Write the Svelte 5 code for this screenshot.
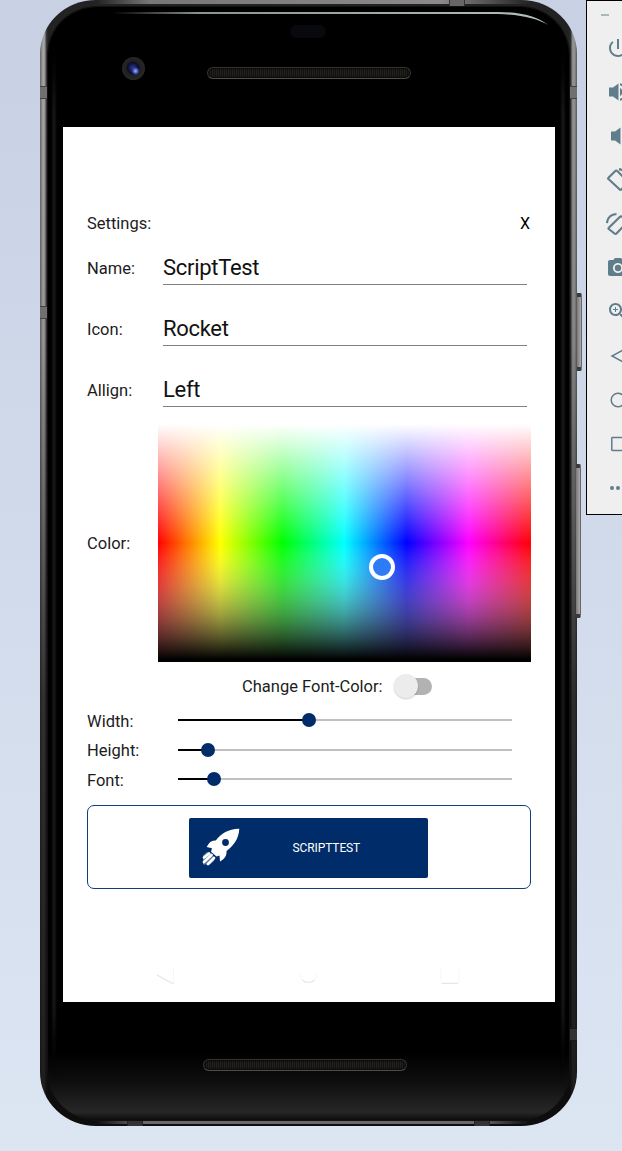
<script>
  const fields = [
    { label: 'Name:', value: 'ScriptTest' },
    { label: 'Icon:', value: 'Rocket' },
    { label: 'Allign:', value: 'Left' },
  ];
  const sliders = [
    { label: 'Width:', pct: 39.2 },
    { label: 'Height:', pct: 9 },
    { label: 'Font:', pct: 11 },
  ];

  // Transparent white to opaque black, blended through gray.
  const stops = Array.from({ length: 17 }, (_, i) => {
    const t = i / 16;
    const g = Math.round(255 * (1 - t));
    return `rgba(${g},${g},${g},${t}) ${50 + t * 49}%`;
  }).join(', ');
  const shade = `linear-gradient(to bottom, #fff 0%, rgba(255,255,255,0) 50%, ${stops})`;
  const hue = 'linear-gradient(to right, #f00, #ff0, #0f0, #0ff, #00f, #f0f, #f00)';

  const tools = [
    { fill: 'M13 3h-2v10h2V3zm4.83 2.17l-1.42 1.42C17.99 7.86 19 9.81 19 12c0 3.87-3.13 7-7 7s-7-3.13-7-7c0-2.19 1.01-4.14 2.58-5.42L6.17 5.17C4.23 6.82 3 9.26 3 12c0 4.97 4.03 9 9 9s9-4.03 9-9c0-2.74-1.23-5.18-3.17-6.83z' },
    { fill: 'M3 7.500v9h4l5.500 4V3.500L7 7.500H3zm13.500 4.500c0-1.770-1.020-3.290-2.500-4.030v8.050c1.480-.730 2.500-2.250 2.500-4.020zM14 3.230v2.060c2.890.860 5 3.540 5 6.710s-2.110 5.850-5 6.710v2.060c4.010-.910 7-4.490 7-8.770s-2.990-7.860-7-8.770z' },
    { fill: 'M18.500 12c0-1.770-1.020-3.290-2.500-4.030v8.050c1.480-.730 2.500-2.250 2.500-4.020zM5 7.500v9h4l5.500 4V3.500L9 7.500H5z' },
    { line: 'M2.500 9.800L9.300 3Q10.300 2 11.300 3L21.500 13.300Q22.500 14.300 21.500 15.300L15.500 21.300Q14.500 22.300 13.500 21.300L2.500 11Q1.700 10.400 2.500 9.800z M13 1.200Q18 2 20 6' },
    { line: 'M2.800 15.800L14 4.800Q15 3.800 16 4.800L20.500 9Q21.500 10 20.500 11L10.500 21.500Q9.500 22.500 8.500 21.500L2.800 17Q2.100 16.400 2.800 15.800z M.9 11Q2 2.500 10.500 2' },
    { fill: 'M9 2L7.170 4H4c-1.100 0-2 .900-2 2v12c0 1.100.900 2 2 2h16c1.100 0 2-.900 2-2V6c0-1.100-.900-2-2-2h-3.170L15 2H9zm3 15c-2.760 0-5-2.240-5-5s2.240-5 5-5 5 2.240 5 5-2.240 5-5 5zm0-1.800a3.200 3.200 0 1 0 0-6.400 3.200 3.200 0 0 0 0 6.400z' },
    { fill: 'M15.500 14h-.790l-.280-.270C15.410 12.590 16 11.110 16 9.500 16 5.910 13.090 3 9.500 3S3 5.910 3 9.500 5.910 16 9.500 16c1.610 0 3.090-.590 4.230-1.570l.270.280v.790l5 4.990L20.490 19l-4.990-5zm-6 0C7.010 14 5 11.990 5 9.500S7.010 5 9.500 5 14 7.010 14 9.500 11.990 14 9.500 14zM12 10h-2v2H9v-2H7V9h2V7h1v2h2v1z' },
    { thin: 'M18 5.500V18.500L6 12z' },
    { thin: 'M12 5.200a6.800 6.800 0 1 0 0 13.600a6.800 6.800 0 1 0 0-13.600z' },
    { thin: 'M6.500 5.500h12v13h-12q-.7 0-.7-.7v-11.600q0-.7.7-.7z' },
    { fill: 'M6 10a2 2 0 1 0 0 4 2 2 0 0 0 0-4zm6 0a2 2 0 1 0 0 4 2 2 0 0 0 0-4zm6 0a2 2 0 1 0 0 4 2 2 0 0 0 0-4z' },
  ];
</script>

<div class="desktop">
  <div class="phone">
    <i class="key key-a"></i>
    <i class="key key-b"></i>
    <i class="seam s1"></i><i class="seam s2"></i><i class="seam s3"></i><i class="seam s4"></i>
    <i class="vseam v1"></i><i class="vseam v2"></i><i class="vseam v3"></i>
    <div class="glass">
      <svg class="shine" width="521" height="40" viewBox="0 0 521 40">
        <defs>
          <linearGradient id="sh" x1="0" x2="1"><stop offset="0" stop-color="#8b9494" stop-opacity="0" /><stop offset=".2" stop-color="#8b9494" /><stop offset="1" stop-color="#b5bfbf" /></linearGradient>
        </defs>
        <path d="M64 5H450Q484 5 500 18Q484 8 450 7H64z" fill="url(#sh)" />
      </svg>
      <div class="forehead">
        <i class="sensor"></i>
        <i class="camera"></i>
        <i class="grille top"></i>
      </div>
      <main class="screen">
        <header><span>Settings:</span><span class="close">X</span></header>
        {#each fields as f}
          <div class="field"><span class="label">{f.label}</span><div class="input">{f.value}</div></div>
        {/each}
        <div class="color-row">
          <span class="label">Color:</span>
          <div class="picker" style="background: {shade}, {hue}"><i class="ring"></i></div>
        </div>
        <div class="toggle-row"><span>Change Font-Color:</span><span class="switch"><i></i></span></div>
        {#each sliders as s}
          <div class="slider-row">
            <span class="label">{s.label}</span>
            <div class="track"><div class="done" style="width: {s.pct}%"></div><i class="thumb" style="left: {s.pct}%"></i></div>
          </div>
        {/each}
        <div class="preview">
          <div class="button">
            <svg width="38" height="38" viewBox="0 0 38 38">
              <path fill="#fff" d="M37.300 .700C27 .500 19 5.500 13.800 12.500C10 12 7 14 4.700 19L10 20.200L9 23.800L14.500 28.500L17.500 27.500L18 33.500C22.500 31 25 27.500 24.500 23C31.500 17.500 36.800 11 37.300 .700z" />
              <circle cx="23.500" cy="14.500" r="3.400" fill="#002d69" />
              <path d="M2 29.500L7 25.500M2 34L9.500 27M6 36L12 30" stroke="#fff" stroke-width="2.700" stroke-linecap="round" />
              <path d="M1 27.500L5 24L8 24.500L13 29.500L12 33L8 36.500H1z" fill="#fff" opacity=".35" />
            </svg>
            <span>SCRIPTTEST</span>
          </div>
        </div>
        <svg class="nav" width="444" height="26" viewBox="0 0 444 26" fill="none" stroke="#f7f7f7">
          <path d="M86.500 22V5" /><path d="M70 13L86.500 22" stroke="#e6e6e6" stroke-width="1.400" />
          <path d="M213 12a8.500 8.500 0 0 0 17 0" /><path d="M215.500 18a8.500 8.500 0 0 0 12 0" stroke="#e8e8e8" stroke-width="1.200" />
          <path d="M354 5V19M372 5V19" /><path d="M354.500 20.500q.5 .8 1.500 .8h14q1 0 1.500-.8" stroke="#e6e6e6" stroke-width="1.200" />
        </svg>
      </main>
      <div class="chin"><i class="grille"></i></div>
    </div>
  </div>

  <aside class="tools">
    <div class="min"><i></i></div>
    {#each tools as t}
      <svg width="24" height="24" viewBox="0 0 24 24">
        {#if t.fill}
          <path d={t.fill} fill="#607d8b" />
        {:else}
          <path d={t.line ?? t.thin} fill="none" stroke="#607d8b" stroke-width={t.line ? 2.2 : 1.5} />
        {/if}
      </svg>
    {/each}
  </aside>
</div>

<style>
  :global(body) { margin: 0; }
  .desktop {
    width: 622px; height: 1151px; overflow: hidden; display: flex; align-items: flex-start;
    background: linear-gradient(#c8d1e4, #d1dbeb 50%, #dce6f3);
    font-family: Roboto, sans-serif; color: #1c1c1c;
  }
  .phone {
    position: relative; flex: none; box-sizing: border-box; width: 537px; height: 1126px; margin-left: 40px;
    padding: 7px 8px 6px; border-radius: 56px / 54px;
    background:
      linear-gradient(to right, transparent 56px, #777 110px, #8b8b8b 400px, transparent 490px) top / 100% 4px no-repeat,
      linear-gradient(to right, transparent 56px, #6a686a 100px, #6a686a 440px, transparent 490px) 0 1121px / 100% 3px no-repeat,
      linear-gradient(transparent, rgba(0,0,0,.1) 30%, rgba(10,10,10,.75) 62%, rgba(10,10,10,.88)),
      linear-gradient(to right, #666 0, #aaa 3px, #999 5px, #444 6px, #222 8px, #222 529px, #333 531px, #888 532px, #999 534px, #777 536px, #555);
  }
  .glass {
    position: relative; height: 1113px; border-radius: 49px / 48px; overflow: hidden;
    background: linear-gradient(#000 0, #000 1045px, #0e0e0e 1075px, #272727 1105px, #0c0c0c 1113px);
    box-shadow: 0 0 0 1px #111;
  }
  .glass::before, .glass::after {
    content: ''; position: absolute; top: 30px; bottom: 40px; width: 6px;
    background: linear-gradient(#000, transparent 60px calc(100% - 60px), #000), linear-gradient(to right, transparent, #1a1a1a, transparent);
    mask-image: linear-gradient(transparent, #000 80px calc(100% - 80px), transparent);
  }
  .glass::before { left: 3px; }
  .glass::after { right: 3px; }
  .shine { position: absolute; left: 0; top: 0; }
  .forehead { position: relative; height: 120px; }
  .sensor { position: absolute; left: 242px; top: 18px; width: 36px; height: 13px; border-radius: 7px; background: #08090e; }
  .camera {
    position: absolute; left: 74px; top: 50px; width: 23px; height: 23px; border-radius: 50%;
    background: radial-gradient(circle at 13.500px 14px, #a5b4f5 0, #3c50b4 2.500px, transparent 4px), radial-gradient(circle at 11px 11px, #2c3a9b 0, #0b0c28 5.500px, #202020 7px, #262626 11px);
  }
  .grille {
    display: block; box-sizing: border-box; width: 204px; height: 12px; border: 1px solid #333331; border-bottom-color: #4d4d49; border-radius: 6px;
    background: repeating-linear-gradient(to right, #25221e 0 1px, #12110f 1px 2px);
    box-shadow: inset 0 0 2px 1px #080808;
  }
  .grille.top { position: absolute; left: 159px; top: 60px; }
  .chin { padding: 57px 0 0 155px; }
  .screen { box-sizing: border-box; margin-left: 15px; width: 492px; height: 875px; padding: 85px 24px 0; background: #fff; font-size: 16.500px; line-height: 24px; }
  header { display: flex; justify-content: space-between; height: 26px; }
  .close { color: #000; padding-right: 1px; font-size: 16px; }
  .label { flex: none; width: 76px; }
  .field { display: flex; height: 61px; }
  .field .label { padding-top: 19px; }
  .input { box-sizing: border-box; width: 364px; height: 47px; padding-top: 18px; border-bottom: 1px solid #808080; font-size: 22px; letter-spacing: -.3px; color: #111; }
  .color-row { display: flex; align-items: center; height: 238px; margin-top: 3px; }
  .color-row .label { width: 71.400px; padding-top: 2px; }
  .picker { position: relative; width: 373px; height: 238px; }
  .ring { position: absolute; left: 210.600px; top: 130px; box-sizing: border-box; width: 26px; height: 26px; border: 4px solid #fff; border-radius: 50%; background: #2e7bf6; }
  .toggle-row { display: flex; align-items: center; height: 24px; padding: 12px 0 0 155px; }
  .toggle-row > span:first-child { width: 152px; white-space: nowrap; padding-top: 1px; }
  .switch { position: relative; width: 38px; height: 24px; display: flex; align-items: center; }
  .switch::before { content: ''; position: absolute; left: 6px; top: 3.500px; width: 32px; height: 17px; border-radius: 9px; background: #b2b2b2; }
  .switch i { position: relative; width: 24px; height: 24px; border-radius: 50%; background: #ececec; box-shadow: 0 1px 2px #0003; }
  .slider-row { display: flex; align-items: center; height: 29.300px; }
  .slider-row .label { padding-top: 1px; }
  .toggle-row + .slider-row { margin-top: 9px; }
  .track { position: relative; width: 334.500px; height: 2px; margin: -2.500px 0 0 14.500px; background: #c0c0c0; }
  .done { height: 2px; background: #000; }
  .thumb { position: absolute; top: -6px; width: 14px; height: 14px; margin-left: -7px; border-radius: 50%; background: #002d69; }
  .preview { box-sizing: border-box; height: 84px; margin-top: 10px; border: 1px solid #133d76; border-radius: 7px; display: flex; justify-content: center; align-items: center; padding: 2px 1px 0 0; }
  .button { display: flex; align-items: center; box-sizing: border-box; width: 239px; height: 60px; padding-left: 13px; border-radius: 2px; background: #002d69; color: #fff; font-size: 12px; }
  .button svg { flex: none; margin-top: -1px; }
  .button span { margin-left: 52.500px; letter-spacing: -.1px; }
  .nav { display: block; margin-top: 73px; }
  .key { position: absolute; right: -5px; box-sizing: border-box; width: 5px; border-right: 1px solid #666; border-block: 4px solid #3a3a3a; border-radius: 0 2px 2px 0; background: linear-gradient(to right, #777, #aaa); }
  .key-a { top: 293px; height: 78px; }
  .key-b { top: 464px; height: 154px; right: -4px; }
  .seam { position: absolute; width: 7px; height: 11px; border-block: 1px solid #444; background: #707070; }
  .s1 { left: 0; top: 86px; }
  .s2 { left: 0; top: 306px; }
  .s3 { right: 0; top: 86px; }
  .s4 { right: 0; top: 1028px; background: #333; border-color: #181818; }
  .vseam { position: absolute; width: 14px; height: 6px; border-inline: 1px solid #333; background: #666; }
  .v1 { left: 409px; top: 0; }
  .v2 { left: 87px; bottom: 0; background: #333; border-color: #222; }
  .v3 { left: 434px; bottom: 0; background: #333; border-color: #222; }
  .tools { flex: none; box-sizing: border-box; width: 60px; height: 515px; margin-left: 9px; padding-left: 19px; border: 1px solid #000; background: #efefef; display: flex; flex-direction: column; gap: 20px; }
  .min { height: 15px; }
  .min i { display: block; width: 8px; height: 2px; margin: 13px 0 0 -5px; background: #a9b8bf; }
  .tools svg { flex: none; display: block; }
</style>
